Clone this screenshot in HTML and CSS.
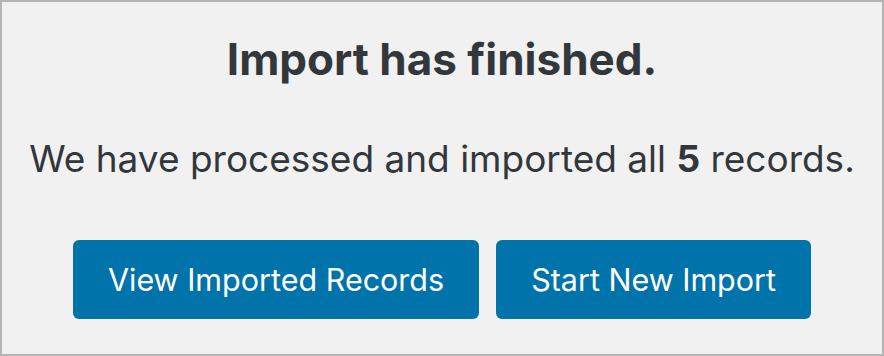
FILE: index.html
```html
<!doctype html>
<html lang="en">

    <head>
        <title>Import Complete</title>
        <link rel="stylesheet" href="styles.css">
    </head>

    <body>

        <div id="divImportDone">
            <h2 class="hDoneTitle">Import has finished.</h2>
            <p class="pDoneText">We have processed and imported all <strong>5</strong> records.</p>
            <div class="divDoneActions">
                <a class="btnDone" href="#">View Imported Records</a>
                <a class="btnDone" href="#">Start New Import</a>
            </div>
        </div>

    </body>

</html>
```

FILE: styles.css
```css
* {
    box-sizing: border-box;
}

body {
    margin: 0;
    font-family: Inter, "Noto Sans", sans-serif;
    color: #32373c;
}

#divImportDone {
    width: 884px;
    height: 356px;
    border: 2px solid #b4b4b4;
    background: #f1f1f1;
    text-align: center;
    padding-top: 29px;
}

.hDoneTitle {
    margin: 0;
    font-size: 44px;
    font-weight: 700;
    line-height: 56px;
}

.pDoneText {
    margin: 48px 0 0 0;
    font-size: 37px;
    line-height: 48px;
}

.pDoneText strong {
    font-weight: 700;
}

.divDoneActions {
    display: flex;
    justify-content: center;
    gap: 17px;
    margin-top: 57px;
}

.btnDone {
    display: block;
    height: 79px;
    line-height: 79px;
    padding: 0 35px;
    background: #0073aa;
    color: #fff;
    border-radius: 6px;
    font-size: 30.5px;
    text-decoration: none;
}
```
